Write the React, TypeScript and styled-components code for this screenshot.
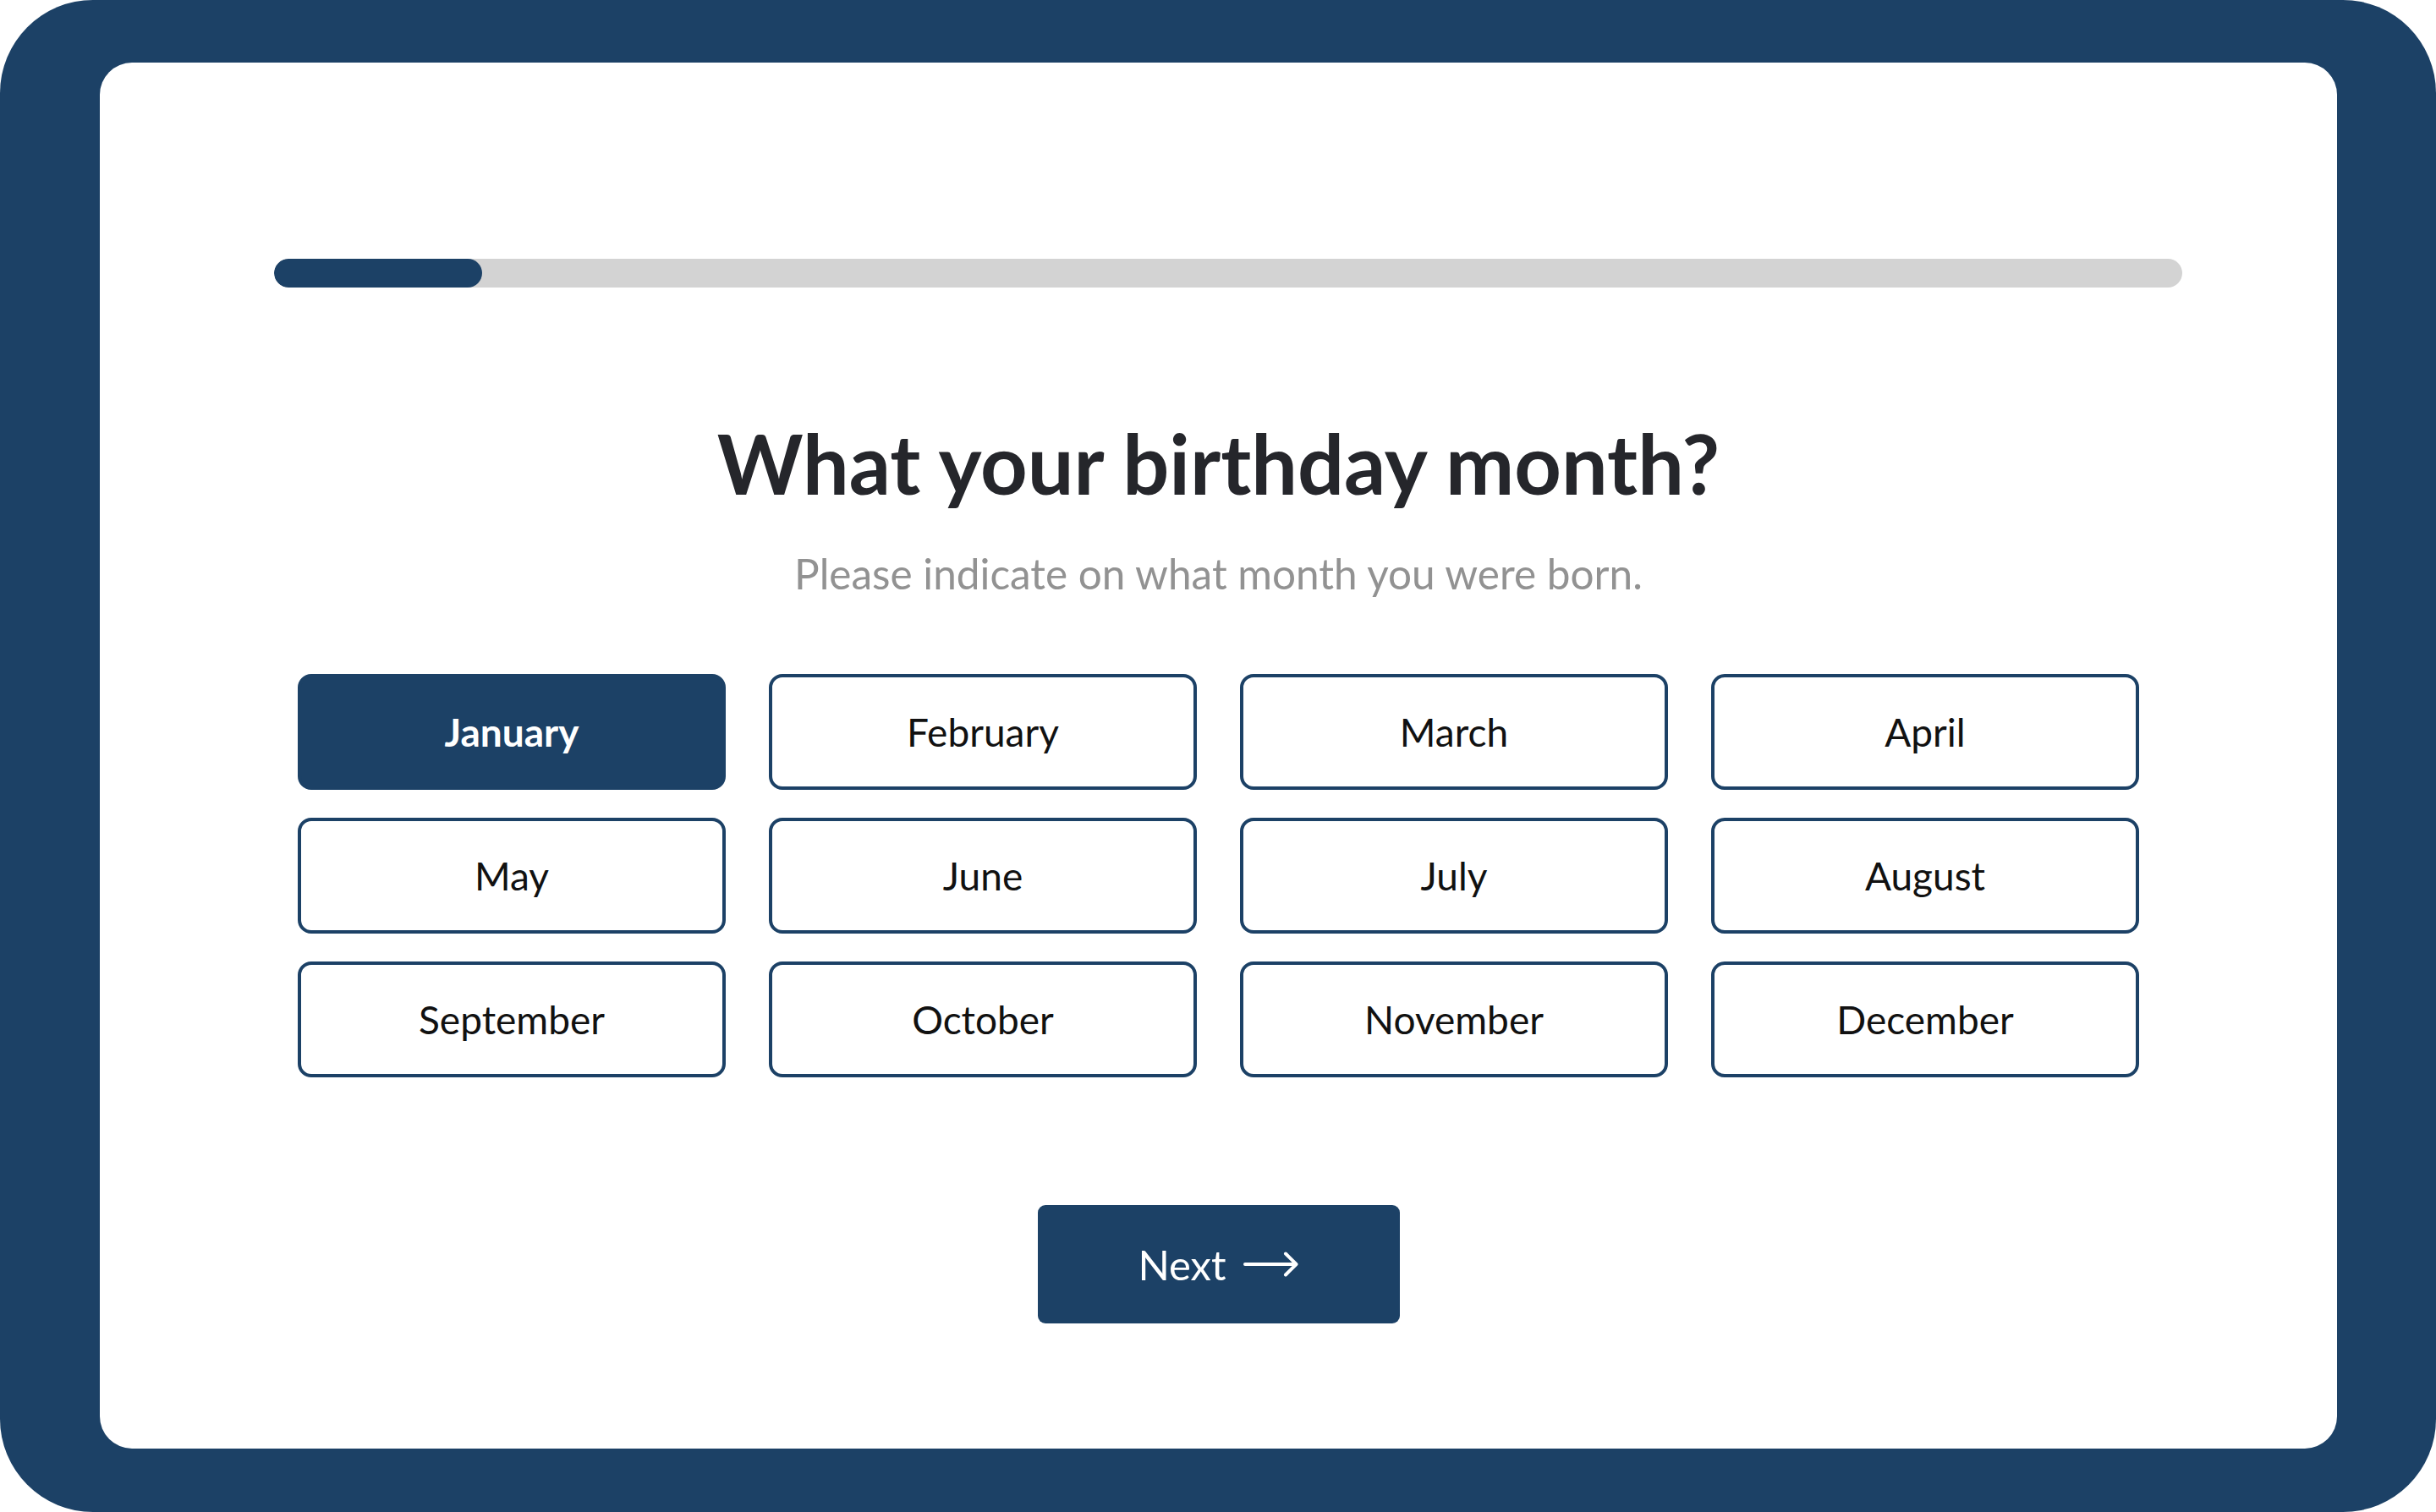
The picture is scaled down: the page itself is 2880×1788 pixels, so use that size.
import React, { useState } from 'react';
import styled, { createGlobalStyle } from 'styled-components';

const GlobalStyle = createGlobalStyle`
  html, body {
    margin: 0;
    padding: 0;
    background: #ffffff;
  }
  * {
    box-sizing: border-box;
  }
`;

const Frame = styled.div`
  width: 2880px;
  height: 1788px;
  padding: 74px 117px 75px 118px;
  background-color: #1c4166;
  border-radius: 110px;
`;

const Card = styled.main`
  height: 100%;
  display: flex;
  flex-direction: column;
  align-items: center;
  background-color: #ffffff;
  border-radius: 38px;
  font-family: Lato, 'Open Sans', sans-serif;
`;

const Track = styled.div`
  align-self: flex-start;
  width: 2256px;
  height: 34px;
  margin: 232px 0 0 206px;
  background-color: #d3d3d3;
  border-radius: 17px;
  overflow: hidden;
`;

const Fill = styled.div`
  height: 100%;
  background-color: #1c4166;
  border-radius: 17px;
`;

const Title = styled.h1`
  margin: 150px 0 0;
  font-size: 97px;
  font-weight: 700;
  line-height: 1.2;
  color: #25262b;
`;

const Subtitle = styled.p`
  margin: 43px 0 0;
  font-size: 49.5px;
  line-height: 1.2;
  color: #929292;
`;

const Months = styled.div`
  display: grid;
  grid-template-columns: repeat(4, 506px);
  grid-auto-rows: 137px;
  column-gap: 51px;
  row-gap: 33px;
  margin-top: 88px;
`;

const Month = styled.button<{ $active: boolean }>`
  display: flex;
  align-items: center;
  justify-content: center;
  border: 4px solid #1c4166;
  border-radius: 16px;
  background-color: ${(p) => (p.$active ? '#1c4166' : '#ffffff')};
  color: ${(p) => (p.$active ? '#ffffff' : '#111111')};
  font-family: inherit;
  font-size: 46px;
  font-weight: ${(p) => (p.$active ? 700 : 400)};
  cursor: pointer;
`;

const Next = styled.button`
  display: flex;
  align-items: center;
  justify-content: center;
  gap: 20px;
  width: 428px;
  height: 140px;
  margin-top: 151px;
  border: none;
  border-radius: 9px;
  background-color: #1c4166;
  color: #ffffff;
  font-family: inherit;
  font-size: 49px;
  cursor: pointer;
`;

const months = [
  'January',
  'February',
  'March',
  'April',
  'May',
  'June',
  'July',
  'August',
  'September',
  'October',
  'November',
  'December',
];

function App() {
  const [selected, setSelected] = useState('January');
  const step = 1;

  return (
    <>
      <GlobalStyle />
      <Frame>
        <Card>
          <Track>
            <Fill style={{ width: `${(step / 9.17) * 100}%` }} />
          </Track>
          <Title>What your birthday month?</Title>
          <Subtitle>Please indicate on what month you were born.</Subtitle>
          <Months>
            {months.map((m) => (
              <Month key={m} $active={m === selected} onClick={() => setSelected(m)}>
                {m}
              </Month>
            ))}
          </Months>
          <Next>
            Next
            <svg width='66' height='32' viewBox='0 0 66 32' fill='none'>
              <path
                d='M2 16H62M50 3.5L62.5 16L50 28.5'
                stroke='#ffffff'
                strokeWidth='4'
                strokeLinecap='round'
                strokeLinejoin='round'
              />
            </svg>
          </Next>
        </Card>
      </Frame>
    </>
  );
}

export default App;
